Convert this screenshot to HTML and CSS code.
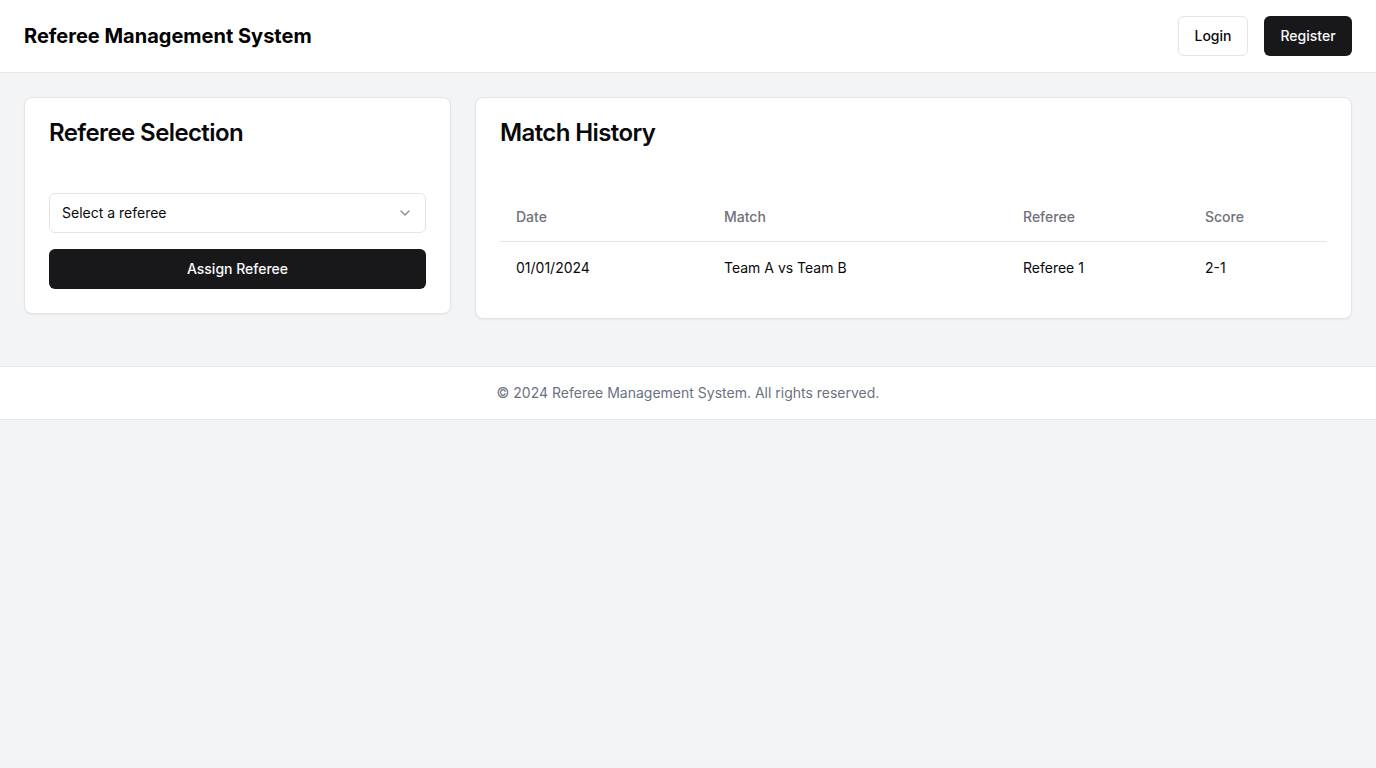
FILE: index.html
```html
<!DOCTYPE html>
<html lang="en">
<head>
<meta charset="utf-8">
<title>Referee Management System</title>
<link rel="stylesheet" href="styles.css">
</head>
<body>
<header class="topbar">
  <h1 class="brand">Referee Management System</h1>
  <nav class="actions">
    <button class="btn btn-outline">Login</button>
    <button class="btn btn-dark">Register</button>
  </nav>
</header>
<main class="content">
  <section class="card card-select">
    <h2 class="card-title">Referee Selection</h2>
    <div class="select-field">
      <span>Select a referee</span>
      <svg class="chevron" width="16" height="16" viewBox="0 0 24 24" fill="none" stroke="currentColor" stroke-width="2" stroke-linecap="round" stroke-linejoin="round"><path d="m6 9 6 6 6-6"/></svg>
    </div>
    <button class="btn btn-dark btn-block">Assign Referee</button>
  </section>
  <section class="card card-history">
    <h2 class="card-title">Match History</h2>
    <table class="history">
      <thead>
        <tr><th class="c1">Date</th><th class="c2">Match</th><th class="c3">Referee</th><th>Score</th></tr>
      </thead>
      <tbody>
        <tr><td>01/01/2024</td><td>Team A vs Team B</td><td>Referee 1</td><td>2-1</td></tr>
      </tbody>
    </table>
  </section>
</main>
<footer class="footer">© 2024 Referee Management System. All rights reserved.</footer>
</body>
</html>
```

FILE: styles.css
```css
* { box-sizing: border-box; }
html, body { margin: 0; padding: 0; }
body {
  background: #f3f4f6;
  font-family: Inter, "Noto Sans", sans-serif;
  color: #09090b;
  min-height: 768px;
}
.topbar {
  height: 73px;
  background: #fff;
  border-bottom: 1px solid #e5e7eb;
  display: flex;
  align-items: center;
  justify-content: space-between;
  padding: 0 24px;
}
.brand {
  margin: 0;
  font-size: 20px;
  font-weight: 700;
  line-height: 28px;
  color: #000;
}
.actions { display: flex; gap: 16px; }
.btn {
  height: 40px;
  border-radius: 6px;
  font-family: inherit;
  font-size: 14px;
  font-weight: 500;
  line-height: 20px;
  padding: 0 16px 1px;
  cursor: pointer;
}
.btn-outline {
  background: #fff;
  border: 1px solid #e4e4e7;
  color: #09090b;
}
.btn-dark {
  background: #18181b;
  color: #fafafa;
  border: none;
}
.actions .btn-outline { width: 70px; padding: 0 0 1px; }
.actions .btn-dark { width: 88px; padding: 0 0 1px; }
.content {
  display: grid;
  grid-template-columns: 427px 1fr;
  gap: 24px;
  align-items: start;
  padding: 24px 24px 47px;
}
.card {
  background: #fff;
  border: 1px solid #e4e4e7;
  border-radius: 8px;
  box-shadow: 0 1px 2px rgba(0,0,0,0.05);
  padding: 23px 24px 24px;
}
.card-title {
  margin: 0 0 48px;
  font-size: 24px;
  line-height: 24px;
  font-weight: 600;
  letter-spacing: -0.6px;
}
.select-field {
  height: 40px;
  border: 1px solid #e4e4e7;
  border-radius: 6px;
  display: flex;
  align-items: center;
  justify-content: space-between;
  padding: 0 12px 1px;
  font-size: 14px;
  color: #09090b;
}
.chevron { color: #71717a; opacity: 0.8; }
.btn-block {
  display: block;
  width: 100%;
  margin-top: 16px;
}
.history {
  width: 100%;
  border-collapse: collapse;
  font-size: 14px;
}
.history th {
  height: 48px;
  text-align: left;
  font-weight: 500;
  color: #71717a;
  padding: 0 16px;
  border-bottom: 1px solid #e4e4e7;
}
.history td {
  padding: 16px;
  line-height: 20px;
  color: #09090b;
}
.history .c1 { width: 208px; }
.history .c2 { width: 299px; }
.history .c3 { width: 182px; }
.footer {
  background: #fff;
  border-top: 1px solid #e5e7eb;
  border-bottom: 1px solid #e5e7eb;
  height: 54px;
  display: flex;
  align-items: center;
  justify-content: center;
  padding-bottom: 1px;
  font-size: 14px;
  color: #6b7280;
}
```
